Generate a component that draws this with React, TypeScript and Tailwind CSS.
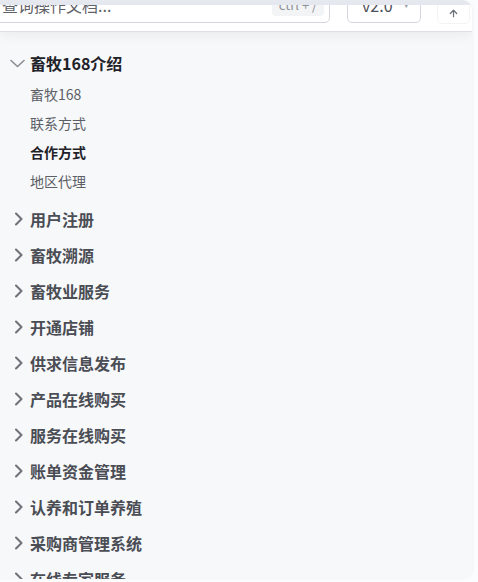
import { ArrowUp } from "lucide-react";

const children = [
	{ label: "畜牧168", active: false },
	{ label: "联系方式", active: false },
	{ label: "合作方式", active: true },
	{ label: "地区代理", active: false },
];

const sections = [
	"用户注册",
	"畜牧溯源",
	"畜牧业服务",
	"开通店铺",
	"供求信息发布",
	"产品在线购买",
	"服务在线购买",
	"账单资金管理",
	"认养和订单养殖",
	"采购商管理系统",
	"在线专家服务",
];

const ChevronDown = () => (
	<svg width="15" height="9" viewBox="0 0 15 9" fill="none">
		<polyline
			points="1,1.5 7.5,7.5 14,1.5"
			stroke="#8a8d93"
			strokeWidth="1.6"
			strokeLinecap="round"
			strokeLinejoin="round"
		/>
	</svg>
);

const ChevronRight = () => (
	<svg width="10" height="14" viewBox="0 0 10 14" fill="none">
		<polyline
			points="2,1.5 7.5,7 2,12.5"
			stroke="#6f7278"
			strokeWidth="2.1"
			strokeLinecap="round"
			strokeLinejoin="round"
		/>
	</svg>
);

const App = () => {
	return (
		<div
			className="w-[478px] h-[582px] bg-[#fbfcfd] overflow-hidden"
			style={{ fontFamily: '"Noto Sans CJK SC", "Noto Sans", sans-serif' }}
		>
			<div className="w-[472px] h-[579px] rounded-r-[10px] bg-[#f7f8fa] overflow-hidden flex flex-col shadow-[1px_0_3px_rgba(0,0,0,0.04)]">
				{/* top strip */}
				<div className="h-[5px] shrink-0 bg-[#e6e9ef]" />

				{/* header, scrolled partly out of view */}
				<div className="relative z-10 h-[27px] shrink-0 overflow-hidden bg-white border-b border-[#dcdfe4] shadow-[0_4px_12px_rgba(0,0,0,0.05)]">
					<div className="flex items-start -mt-[18px] -ml-[12px]">
						<div className="h-9 w-[342px] flex items-center justify-between pl-[13px] pr-[5px] rounded-[5px] border border-[#d3d6db] bg-white">
							<span className="text-[16px] text-[#5f6269]">查询操作文档...</span>
							<span className="h-[22px] w-[52px] flex items-center justify-center rounded bg-[#f3f4f6] text-[13px] text-[#8d9096]">
								ctrl + /
							</span>
						</div>
						<div className="ml-[17px] h-9 w-[74px] flex items-center pl-[14px] rounded-[5px] border border-[#d3d6db] bg-white">
							<span className="text-[16px] text-[#4f5259]">v2.0</span>
							<span className="ml-[11px] text-[9px] text-[#9a9da3]">▾</span>
						</div>
						<div className="ml-[16px] h-[37px] w-[33px] flex items-end justify-center pb-[4px] rounded-[5px] border border-[#f2f3f5] bg-white">
							<ArrowUp size={11} strokeWidth={2.6} color="#6b6f77" />
						</div>
					</div>
				</div>

				{/* sidebar menu */}
				<nav className="pt-[14px]">
					<div className="h-[34px] flex items-center pl-[10px]">
						<span className="w-[20px] flex items-center">
							<ChevronDown />
						</span>
						<span className="text-[16px] font-bold text-[#1f2329]">畜牧168介绍</span>
					</div>
					<ul>
						{children.map((c) => (
							<li
								key={c.label}
								className={`h-[29px] flex items-center pl-[30px] text-[14px] ${
									c.active ? "font-bold text-[#1f2329]" : "text-[#5c5f66]"
								}`}
							>
								{c.label}
							</li>
						))}
					</ul>
					<ul className="mt-[5px]">
						{sections.map((s) => (
							<li key={s} className="h-9 flex items-center pl-[14px]">
								<span className="w-[16px] flex items-center">
									<ChevronRight />
								</span>
								<span className="text-[16px] font-semibold text-[#4a4d54]">{s}</span>
							</li>
						))}
					</ul>
				</nav>
			</div>
		</div>
	);
};

export default App;
